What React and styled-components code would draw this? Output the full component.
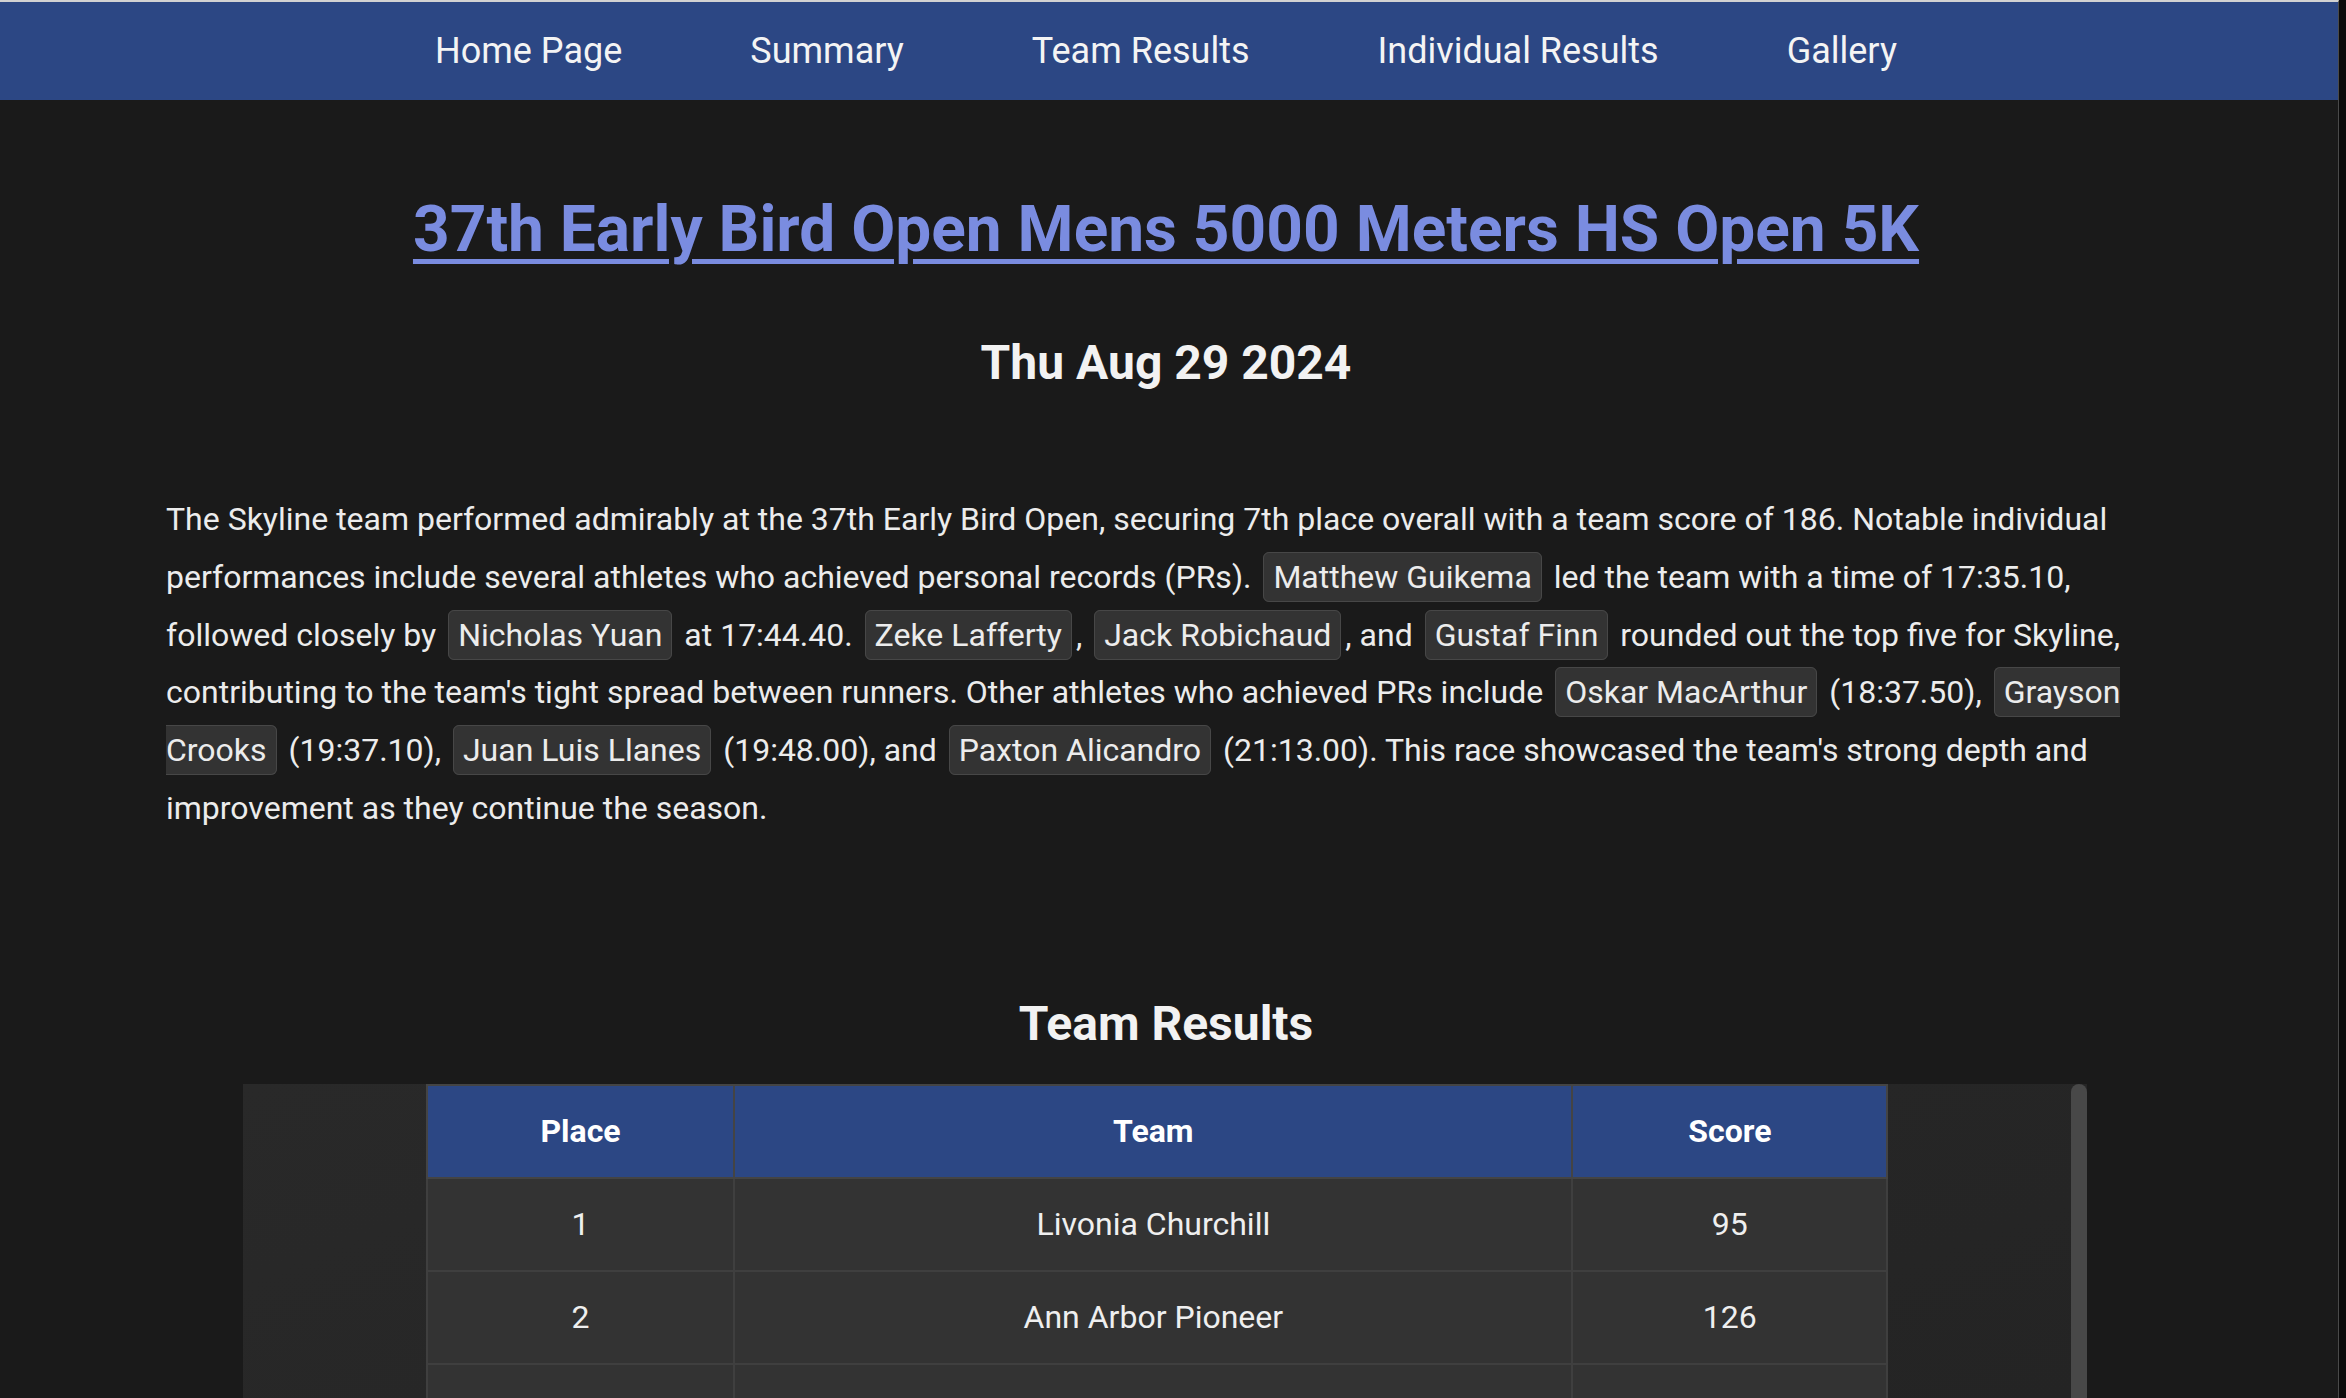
import React from 'react';
import styled, {createGlobalStyle} from 'styled-components';

const GlobalStyle = createGlobalStyle`
    html, body {
        margin: 0;
        padding: 0;
        background: #0b0b0b;
        font-family: Roboto, "Noto Sans", Arial, sans-serif;
    }
`;

const Frame = styled.div`
    width: 2339px;
    min-height: 100vh;
    background: #1a1a1a;
    border-top: 2px solid #d2d2d2;
    border-right: 1px solid #4a4a4a;
    box-sizing: border-box;
    overflow: hidden;
`;

const NavBar = styled.nav`
    height: 98px;
    padding-right: 6px;
    background: #2c4784;
    display: flex;
    justify-content: center;
    align-items: center;
    gap: 128px;
`;

const NavLink = styled.a`
    color: #f4f4f4;
    font-size: 36px;
    text-decoration: none;
    cursor: pointer;
`;

const Main = styled.main`
    padding: 0 172px 0 166px;
`;

const Title = styled.h1`
    margin: 91px 0 0;
    text-align: center;
    font-size: 64px;
    line-height: 77px;
    font-weight: 700;

    a {
        color: #7a8ce0;
        text-decoration: underline;
        text-decoration-thickness: 5px;
        text-underline-offset: 8px;
    }
`;

const DateLine = styled.h2`
    margin: 66px 0 0;
    text-align: center;
    color: #f2f2f2;
    font-size: 48px;
    line-height: 58px;
    font-weight: 700;
`;

const Summary = styled.p`
    margin: 99px 6px 0 0;
    color: #ececec;
    font-size: 32px;
    line-height: 57.75px;
`;

const Athlete = styled.span`
    background: #333333;
    border: 1px solid #474747;
    border-radius: 6px;
    padding: 5px 9px;
    margin: 0 4px;
`;

const SectionTitle = styled.h2`
    margin: 157px 0 0;
    text-align: center;
    color: #f2f2f2;
    font-size: 48px;
    line-height: 58px;
    font-weight: 700;
`;

const TableCard = styled.div`
    margin: 31px 79px 0 77px;
    height: 700px;
    display: flex;
    background: linear-gradient(160deg, #292929 0%, #222222 100%);
`;

const ScrollArea = styled.div`
    flex: 1;
    overflow-y: auto;
    scrollbar-width: none;
`;

const ScrollTrack = styled.div`
    width: 16px;
    flex: none;
`;

const ScrollThumb = styled.div`
    height: 560px;
    background: #484848;
    border-radius: 8px 8px 0 0;
`;

const Table = styled.table`
    width: 80%;
    margin: 0 auto;
    border-collapse: collapse;
    table-layout: fixed;
`;

const HeadCell = styled.th`
    width: ${p => p.$w};
    height: 91px;
    padding: 0;
    background: #2c4784;
    color: #ffffff;
    font-size: 32px;
    font-weight: 700;
    border: 2px solid #444444;
`;

const Cell = styled.td`
    height: 91px;
    padding: 0;
    background: #333333;
    color: #efefef;
    font-size: 32px;
    text-align: center;
    border: 2px solid #3f3f3f;
`;

const navItems = ['Home Page', 'Summary', 'Team Results', 'Individual Results', 'Gallery'];

const teams = [
    [1, 'Livonia Churchill', 95],
    [2, 'Ann Arbor Pioneer', 126],
    [3, 'Saline High School', 139],
    [4, 'Dexter', 152],
    [5, 'Brighton', 160],
    [6, 'Novi', 171],
    [7, 'Ann Arbor Skyline', 186],
    [8, 'Plymouth', 204],
];

export default function App() {
    return (
        <>
            <GlobalStyle />
            <Frame>
                <NavBar>
                    {navItems.map(item => <NavLink key={item}>{item}</NavLink>)}
                </NavBar>
                <Main>
                    <Title><a>37th Early Bird Open Mens 5000 Meters HS Open 5K</a></Title>
                    <DateLine>Thu Aug 29 2024</DateLine>
                    <Summary>
                        The Skyline team performed admirably at the 37th Early Bird Open, securing 7th place overall with a team score of 186. Notable individual performances include several athletes who achieved personal records (PRs). <Athlete>Matthew Guikema</Athlete> led the team with a time of 17:35.10, followed closely by <Athlete>Nicholas Yuan</Athlete> at 17:44.40. <Athlete>Zeke Lafferty</Athlete>, <Athlete>Jack Robichaud</Athlete>, and <Athlete>Gustaf Finn</Athlete> rounded out the top five for Skyline, contributing to the team's tight spread between runners. Other athletes who achieved PRs include <Athlete>Oskar MacArthur</Athlete> (18:37.50), <Athlete>Grayson Crooks</Athlete> (19:37.10), <Athlete>Juan Luis Llanes</Athlete> (19:48.00), and <Athlete>Paxton Alicandro</Athlete> (21:13.00). This race showcased the team's strong depth and improvement as they continue the season.
                    </Summary>
                    <SectionTitle>Team Results</SectionTitle>
                    <TableCard>
                        <ScrollArea>
                            <Table>
                                <thead>
                                    <tr>
                                        <HeadCell $w="21%">Place</HeadCell>
                                        <HeadCell $w="57.5%">Team</HeadCell>
                                        <HeadCell $w="21.5%">Score</HeadCell>
                                    </tr>
                                </thead>
                                <tbody>
                                    {teams.map(([place, team, score]) => (
                                        <tr key={place}>
                                            <Cell>{place}</Cell>
                                            <Cell>{team}</Cell>
                                            <Cell>{score}</Cell>
                                        </tr>
                                    ))}
                                </tbody>
                            </Table>
                        </ScrollArea>
                        <ScrollTrack><ScrollThumb /></ScrollTrack>
                    </TableCard>
                </Main>
            </Frame>
        </>
    );
}
